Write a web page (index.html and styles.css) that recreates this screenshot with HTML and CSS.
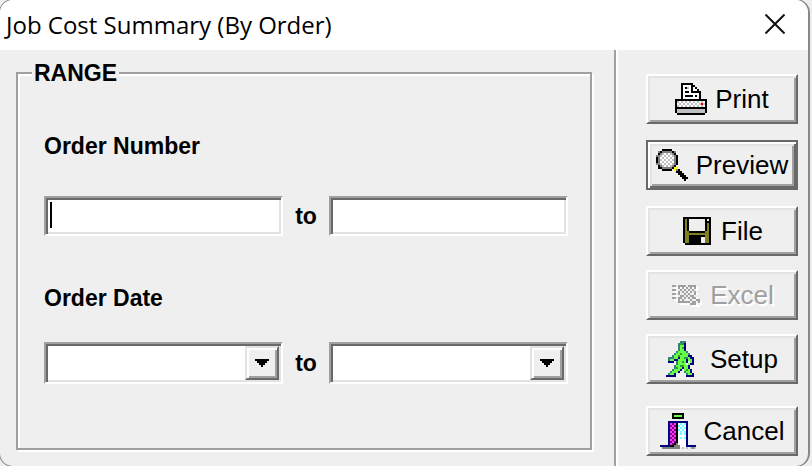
FILE: index.html
```html
<!DOCTYPE html>
<html lang="en">
<head>
<meta charset="utf-8">
<title>Job Cost Summary (By Order)</title>
<link rel="stylesheet" href="styles.css">
</head>
<body>

<form class="dialog">
  <div class="titlebar">
    <h1>Job Cost Summary (By Order)</h1>
    <button type="button" class="close" aria-label="Close">
      <svg width="20" height="20" viewBox="0 0 20 20"><path d="M0.5 0.5L19.5 19.5M19.5 0.5L0.5 19.5" stroke="#111" stroke-width="2"/></svg>
    </button>
  </div>

  <div class="content">
    <div class="main">
      <fieldset class="range">
        <legend>RANGE</legend>

        <div class="group number">
          <label for="numFrom">Order Number</label>
          <div class="row">
            <div class="text caret"><input type="text" id="numFrom"></div>
            <label for="numTo">to</label>
            <div class="text"><input type="text" id="numTo"></div>
          </div>
        </div>

        <div class="group date">
          <label for="dateFrom">Order Date</label>
          <div class="row">
            <div class="combo">
              <select id="dateFrom"><option></option></select>
              <span class="arrow"><svg width="14" height="8" viewBox="0 -0.5 7 4"><path d="M0 0h7M1 1h5M2 2h3M3 3h1"/></svg></span>
            </div>
            <label for="dateTo">to</label>
            <div class="combo">
              <select id="dateTo"><option></option></select>
              <span class="arrow"><svg width="14" height="8" viewBox="0 -0.5 7 4"><path d="M0 0h7M1 1h5M2 2h3M3 3h1"/></svg></span>
            </div>
          </div>
        </div>
      </fieldset>
    </div>

    <div class="side">
      <div class="output">
        <button type="button" class="btn">
          <svg width="32" height="32" viewBox="0 -0.5 16 16">
            <path stroke="#fff" d="M4 1h4M4 2h4M9 2h1M4 3h4M9 3h2M4 4h4M4 5h8M4 6h8M4 7h8M1 9h14M1 10h14M1 11h14"/>
            <path stroke="#c0c0c0" d="M6 2h1M1 9h1M3 9h1M5 9h1M7 9h1M9 9h1M11 9h1M13 9h1M2 10h1M4 10h1M6 10h1M8 10h1M10 10h1M12 10h1M14 10h1M1 11h1M3 11h1M5 11h1M7 11h1M9 11h1M11 11h1M13 11h1M1 13h14M1 14h14"/>
            <path stroke="#000" d="M3 0h6M3 1h1M8 1h2M3 2h1M5 2h1M8 2h1M10 2h1M3 3h1M8 3h1M11 3h1M3 4h1M5 4h2M8 4h5M3 5h1M12 5h1M3 6h1M5 6h4M10 6h1M12 6h1M3 7h1M12 7h1M0 8h16M0 9h1M15 9h1M0 10h1M15 10h1M0 11h1M15 11h1M0 12h16M0 13h1M15 13h1M0 14h1M15 14h1M1 15h14"/>
            <path stroke="#f00" d="M13 10h1"/>
          </svg>
          <span>Print</span>
        </button>
        <button type="submit" class="btn default">
          <svg width="32" height="32" viewBox="0 -0.5 16 16">
            <path stroke="#fff" d="M3 2h5M2 3h7M2 4h7M2 5h7M2 6h7M2 7h7M3 8h5"/>
            <path stroke="#c0c0c0" d="M3 2h1M5 2h1M7 2h1M2 3h1M4 3h1M6 3h1M8 3h1M3 4h1M5 4h1M7 4h1M2 5h1M4 5h1M6 5h1M8 5h1M3 6h1M5 6h1M7 6h1M2 7h1M4 7h1M6 7h1M8 7h1M3 8h1M5 8h1M7 8h1"/>
            <path stroke="#808080" d="M1 1h2M3 1h5M8 1h2M2 2h1M8 2h1M0 3h2M9 3h1M1 4h1M9 4h1M1 5h1M9 5h1M1 6h1M9 6h1M0 7h2M9 7h1M2 8h1M8 8h1M3 9h5M10 10h1"/>
            <path stroke="#000" d="M3 0h5M2 1h1M8 1h1M1 2h1M9 2h1M0 4h1M10 4h1M0 5h1M10 5h1M0 6h1M10 6h1M10 3h1M10 7h1M1 8h1M9 8h1M1 9h2M8 9h1M3 10h5M11 10h1M10 11h3M11 12h3M12 13h3M13 14h3M14 15h1"/>
            <path stroke="#ff0" d="M9 9h2M9 10h1"/>
          </svg>
          <span>Preview</span>
        </button>
        <button type="button" class="btn">
          <svg width="32" height="28" viewBox="-1 -0.5 16 14">
            <path stroke="#000" d="M0 0h14M0 1h14M0 2h14M0 3h14M0 4h14M0 5h14M0 6h14M0 7h14M0 8h14M0 9h14M0 10h14M0 11h14M0 12h14M1 13h13"/>
            <path stroke="#808020" d="M1 1h1M1 2h1M1 3h1M12 3h1M1 4h1M12 4h1M1 5h1M12 5h1M1 6h1M12 6h1M1 7h2M11 7h2M1 8h12M1 9h2M11 9h2M1 10h2M11 10h2M1 11h2M11 11h2M1 12h2M11 12h2"/>
            <path stroke="#efefef" d="M3 1h8M12 1h1M3 2h8M3 3h8M3 4h8M3 5h8M3 6h8M9 10h2M9 11h2M9 12h2"/>
          </svg>
          <span>File</span>
        </button>
      </div>

      <div class="tools">
        <button type="button" class="btn" disabled>
          <svg width="32" height="24" viewBox="-1 -0.5 16 12">
            <path stroke="#fff" d="M1 2h2M4 2h4M9 2h4M1 4h2M1 6h2M1 8h2M12 3h1M12 5h1M6 5h1M8 4h1M10 6h1M12 7h1M4 9h1M6 7h1M4 10h6M13 9h2M11 10h2M14 10h1M10 11h4"/>
            <path stroke="#a0a0a0" d="M0 1h2M3 1h4M8 1h4M3 2h1M5 2h1M7 2h1M9 2h1M11 2h1M0 3h2M4 3h1M6 3h1M8 3h1M10 3h1M3 4h1M5 4h1M7 4h1M9 4h1M11 4h1M0 5h2M3 5h1M6 5h1M8 5h1M11 5h1M4 6h2M7 6h1M9 6h2M0 7h2M3 7h2M6 7h1M8 7h1M10 7h2M3 8h1M5 8h1M9 8h1M12 8h2M3 9h6M10 9h2M13 9h1M9 10h3"/>
          </svg>
          <span>Excel</span>
        </button>
        <button type="button" class="btn">
          <svg width="36" height="36" viewBox="0 -0.5 18 18">
            <path stroke="#66ff44" d="M7 2h2M7 3h2M7 4h2M6 5h4M5 6h6M4 7h7M3 8h9M2 9h3M6 9h4M11 9h2M6 10h4M12 10h1M6 11h4M11 11h1M5 12h6M5 13h6M4 14h3M9 14h3M3 15h3M10 15h2M2 16h2M11 16h2"/>
            <path stroke="#339933" d="M7 1h2M8 3h1M7 6h1M6 7h1M9 8h1M8 10h1M7 12h2M5 13h1M10 14h1"/>
            <path stroke="#338080" d="M7 0h3M6 1h1M6 2h1M6 3h1M6 4h1M5 5h1M10 5h1M4 6h1M11 6h1M3 7h1M1 8h3M10 8h1M1 9h1M5 10h1M5 11h1M4 12h1M4 13h1M3 14h1M2 15h1M1 16h1M9 15h1M10 16h1"/>
            <path stroke="#000080" d="M9 1h1M9 2h1M9 3h1M9 4h1M11 7h2M6 8h1M12 8h2M4 9h2M10 9h1M13 9h1M1 10h3M10 10h1M13 10h1M12 11h2M11 12h1M8 13h1M11 13h1M7 14h1M12 14h1M6 15h1M12 15h1M4 16h1M13 16h1M0 17h5M10 17h4"/>
          </svg>
          <span>Setup</span>
        </button>
      </div>

      <button type="reset" class="btn cancel">
        <svg width="36" height="36" viewBox="0 -0.5 18 18">
          <path stroke="#fff" d="M9 5h4M9 6h4M9 7h4M9 8h4M9 9h4M9 10h4M9 11h4M9 12h4M9 13h4M9 14h4M9 15h4M10 16h3"/>
          <path stroke="#66ffff" d="M10 5h1M12 5h1M9 6h1M11 6h1M10 7h1M12 7h1M9 8h1M11 8h1M10 9h1M12 9h1M10 10h1M12 10h1M10 12h1M12 12h1"/>
          <path stroke="#800080" d="M5 5h3M5 6h3M5 7h3M5 8h3M5 9h3M5 10h3M5 11h3M5 12h3M5 13h3M5 14h3M5 15h3"/>
          <path stroke="#f3f" d="M5 5h1M7 5h1M6 6h1M5 7h1M7 7h1M6 8h1M5 9h1M7 9h1M6 10h1M5 11h1M7 11h1M6 12h1M5 13h1M7 13h1M6 14h1M5 15h1"/>
          <path stroke="#000" d="M6 0h6M6 1h1M11 1h1M6 2h6M8 5h1M8 6h1M8 7h1M8 8h1M8 9h1M8 10h1M8 11h1M8 12h1M8 13h1M8 14h1M7 15h1M5 16h2"/>
          <path stroke="#66ff44" d="M7 1h4"/>
          <path stroke="#808080" d="M8 15h1M7 16h3M1 17h9M16 17h1"/>
          <path stroke="#c0c0c0" d="M11 17h1M13 17h1M15 17h1M17 17h1"/>
          <path stroke="#000080" d="M4 4h10M4 5h1M13 5h1M4 6h1M13 6h1M4 7h1M13 7h1M4 8h1M13 8h1M4 9h1M13 9h1M4 10h1M13 10h1M4 11h1M13 11h1M4 12h1M13 12h1M4 13h1M13 13h1M4 14h1M13 14h1M4 15h1M13 15h1M0 16h5M13 16h5"/>
        </svg>
        <span>Cancel</span>
      </button>
    </div>
  </div>
</form>

</body>
</html>
```
FILE: styles.css
```css
* {
  box-sizing: border-box;
}

body {
  margin: 0;
  overflow: hidden;
  background-color: #eee;
  font-family: "Liberation Sans", Arial, sans-serif;
  color: #000;
}

.dialog {
  display: flex;
  flex-direction: column;
  min-height: calc(100vh + 2px);
  margin: -1px 2px -1px -1px;
  border: 1px solid #888;
  border-right: 2px solid #888;
  border-radius: 14px;
  background-color: #efefef;
  overflow: hidden;
}

.titlebar {
  display: flex;
  justify-content: space-between;
  align-items: center;
  height: 50px;
  padding: 0 23px 2px 6px;
  background-color: white;
}

.titlebar h1 {
  margin: 0;
  font-family: "Open Sans", "Noto Sans", sans-serif;
  font-size: 24px;
  font-weight: normal;
}

.close {
  display: flex;
  padding: 0;
  border: 0;
  background-color: transparent;
}

.content {
  display: flex;
  flex: 1;
}

.main {
  display: flex;
  flex: 1;
  padding: 11px 22px 16px 16px;
  border-right: 2px solid #a0a0a0;
}

/* etched frame */
.range {
  flex: 1;
  min-width: 0;
  margin: 0;
  padding: 49px 22px 0 26px;
  border: 2px solid #a0a0a0;
  box-shadow: 2px 2px white, inset 2px 2px white;
}

.range legend {
  margin-left: -12px;
  padding: 0 2px;
  background-color: #efefef;
}

.range legend,
.range label {
  font-size: 23px;
  font-weight: bold;
  line-height: 24px;
}

.group {
  display: flex;
  flex-direction: column;
}

.number {
  gap: 38px;
}

.date {
  gap: 32px;
  margin-top: 50px;
}

.row {
  display: flex;
  align-items: center;
  justify-content: space-between;
  gap: 12px;
}

/* sunken boxes */
.text,
.combo {
  position: relative;
  display: flex;
  flex: 1;
  height: 40px;
  border: 2px solid white;
  border-top-color: #a0a0a0;
  border-left-color: #a0a0a0;
  background-color: white;
  box-shadow: inset 2px 2px #696969, inset -2px -2px #e3e3e3;
}

.combo {
  height: 42px;
}

.text input,
.combo select {
  width: 100%;
  margin: 0;
  padding: 2px 8px;
  border: 0;
  outline: 0;
  appearance: none;
  background-color: transparent;
  font-family: inherit;
  font-size: 22px;
}

.caret::before {
  content: "";
  position: absolute;
  top: 4px;
  bottom: 6px;
  left: 4px;
  width: 2px;
  background-color: black;
}

.arrow {
  position: absolute;
  top: 2px;
  right: 2px;
  bottom: 2px;
  display: flex;
  align-items: center;
  justify-content: center;
  width: 34px;
  border: 2px solid #696969;
  border-top-color: #e3e3e3;
  border-left-color: #e3e3e3;
  background-color: #efefef;
  box-shadow: inset 2px 2px white, inset -2px -2px #a0a0a0;
  pointer-events: none;
}

.arrow path {
  stroke: black;
}

.arrow svg,
.btn svg {
  flex: none;
  shape-rendering: crispEdges;
}

.side {
  width: 192px;
  padding: 24px 10px 10px 28px;
  border-left: 2px solid white;
}

.output,
.tools {
  display: flex;
  flex-direction: column;
}

.output {
  gap: 16px;
}

.tools {
  gap: 14px;
  margin: 14px 0 22px;
}

/* raised buttons */
.btn {
  display: flex;
  align-items: center;
  justify-content: center;
  gap: 8px;
  width: 100%;
  height: 50px;
  padding: 0;
  border: 2px solid #696969;
  border-top-color: white;
  border-left-color: white;
  background-color: #efefef;
  box-shadow: inset 2px 2px #e3e3e3, inset -2px -2px #a0a0a0;
  font-family: "Liberation Sans Narrow", "Liberation Sans", Arial, sans-serif;
  font-size: 26px;
  line-height: 30px;
  color: black;
}

.default {
  border-color: #696969;
  box-shadow: inset 2px 2px white, inset -2px -2px #696969, inset 4px 4px #e3e3e3, inset -4px -4px #a0a0a0;
}

.btn:disabled {
  color: #a0a0a0;
  text-shadow: 2px 2px white;
}
```
